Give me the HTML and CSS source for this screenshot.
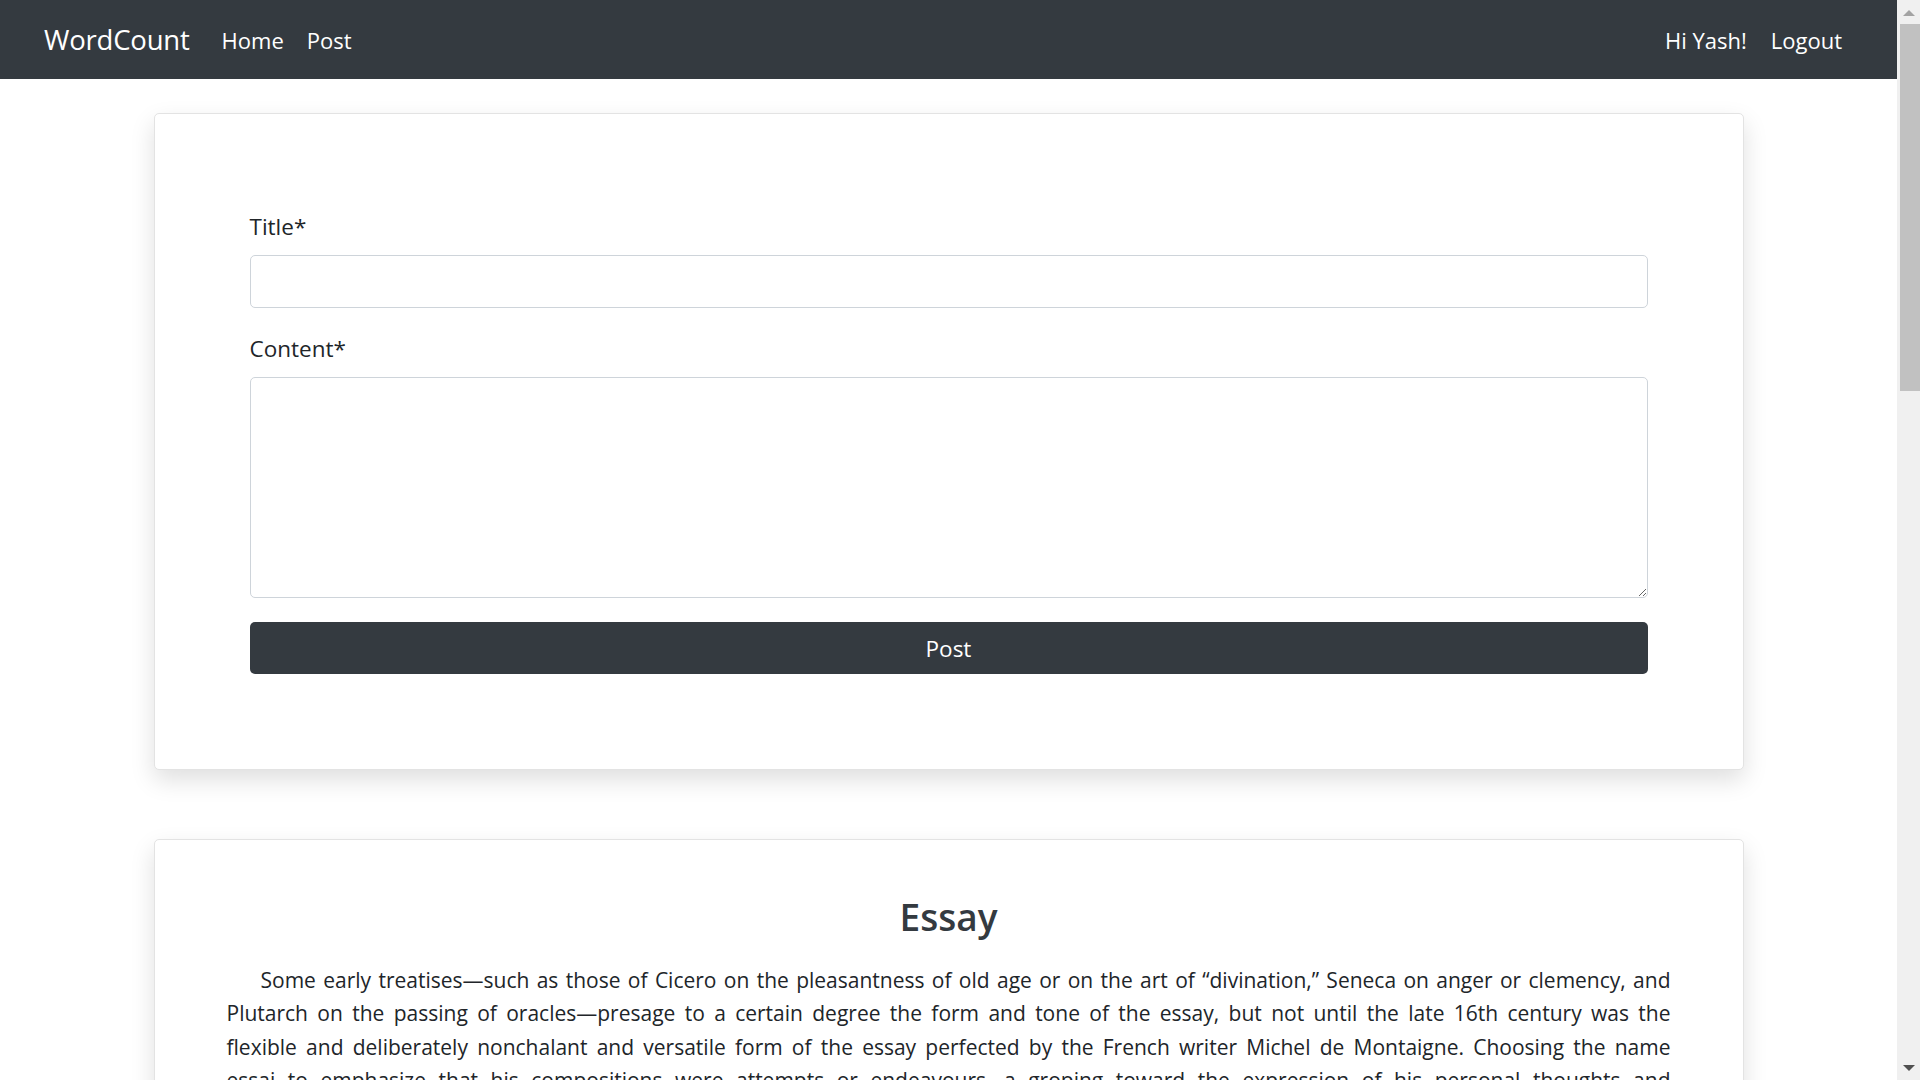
FILE: index.html
```html
<!DOCTYPE html>
<html lang="en">
<head>
<meta charset="utf-8">
<title>WordCount</title>
<link rel="stylesheet" href="styles.css">
</head>
<body>
<div class="page">
  <nav class="navbar">
    <a class="brand" href="#">WordCount</a>
    <ul class="nav-links">
      <li><a href="#">Home</a></li>
      <li><a href="#">Post</a></li>
    </ul>
    <ul class="nav-links nav-right">
      <li><a href="#">Hi Yash!</a></li>
      <li><a href="#">Logout</a></li>
    </ul>
  </nav>
  <main class="main">
    <section class="card form-card">
      <form class="post-form">
        <label class="field-label" for="title">Title*</label>
        <input class="field-input" id="title" type="text">
        <label class="field-label content-label" for="content">Content*</label>
        <textarea class="field-textarea" id="content"></textarea>
        <button class="btn-post" type="button">Post</button>
      </form>
    </section>
    <section class="card essay-card">
      <h2 class="essay-title">Essay</h2>
      <p class="essay-text"><span class="line line-first">Some early treatises—such as those of Cicero on the pleasantness of old age or on the art of “divination,” Seneca on anger or clemency, and</span> <span class="line">Plutarch on the passing of oracles—presage to a certain degree the form and tone of the essay, but not until the late 16th century was the</span> <span class="line">flexible and deliberately nonchalant and versatile form of the essay perfected by the French writer Michel de Montaigne. Choosing the name</span> <span class="line">essai to emphasize that his compositions were attempts or endeavours, a groping toward the expression of his personal thoughts and</span> <span class="rest">experiences, Montaigne used the essay as a means of self-discovery. His Essais, published in their final form in 1595, deal with almost every subject under the sun, from cannibals to the art of conversation.</span></p>
    </section>
  </main>
</div>
<div class="scrollbar">
  <div class="sb-arrow sb-up"></div>
  <div class="sb-thumb"></div>
  <div class="sb-track"></div>
  <div class="sb-arrow sb-down"></div>
</div>
</body>
</html>
```
FILE: styles.css
```css
* { box-sizing: border-box; }
html, body { margin: 0; padding: 0; }
body {
  height: 100vh;
  overflow: hidden;
  display: flex;
  font-family: "Open Sans", "Noto Sans", sans-serif;
  color: #212529;
  background: #fff;
}
.page {
  flex: 1;
  min-width: 0;
  overflow: hidden;
}
.navbar {
  height: 79px;
  background: #343a40;
  display: flex;
  align-items: center;
  padding: 0 55px 0 44px;
}
.navbar a { color: #fff; text-decoration: none; }
.brand {
  font-size: 27.5px;
  margin-right: 32px;
  letter-spacing: -0.2px;
}
.nav-links {
  list-style: none;
  margin: 0;
  padding: 0;
  display: flex;
  gap: 23px;
  font-size: 22px;
}
.nav-right { margin-left: auto; gap: 24px; }

.main { padding-top: 34px; }
.card {
  width: 1590px;
  margin: 0 auto;
  background: #fff;
  border: 1px solid #e3e3e3;
  border-radius: 5px;
  box-shadow: 0 10px 24px rgba(0, 0, 0, 0.13);
}
.form-card { padding: 96px 95px 95px; }
.post-form { display: flex; flex-direction: column; }
.field-label {
  font-size: 22.5px;
  line-height: 34px;
  margin-bottom: 11px;
  color: #212529;
}
.content-label { margin-top: 24px; }
.field-input, .field-textarea {
  width: 100%;
  border: 1px solid #ced4da;
  border-radius: 5px;
  font-family: inherit;
  font-size: 22px;
  background: #fff;
  outline: none;
}
.field-input { height: 53px; }
.field-textarea { height: 221px; resize: vertical; display: block; }
.btn-post {
  margin-top: 24px;
  height: 52px;
  width: 100%;
  border: none;
  border-radius: 5px;
  background: #343a40;
  color: #fff;
  font-family: inherit;
  font-size: 22.5px;
}

.essay-card {
  margin-top: 69px;
  padding: 55px 72px 60px;
}
.essay-title {
  margin: 0 0 25px;
  text-align: center;
  font-size: 37px;
  line-height: 44px;
  font-weight: 600;
  color: #343a40;
}
.essay-text {
  margin: 0;
  font-size: 21px;
  line-height: 33.3px;
  text-align: justify;
  color: #212529;
}
.line {
  display: block;
  text-align: justify;
  text-align-last: justify;
  white-space: nowrap;
}
.line-first { padding-left: 34px; }
.rest { display: block; }

.scrollbar {
  width: 23px;
  height: 100vh;
  background: #f0f0f0;
  display: flex;
  flex-direction: column;
  align-items: center;
}
.sb-arrow {
  width: 0;
  height: 0;
  border-left: 6px solid transparent;
  border-right: 6px solid transparent;
}
.sb-up {
  margin-top: 10px;
  border-bottom: 6px solid #a3a3a3;
}
.sb-thumb {
  margin-top: 8px;
  width: 20px;
  margin-left: 2px;
  height: 367px;
  background: #c1c1c1;
}
.sb-track { flex: 1; }
.sb-down {
  margin-bottom: 9px;
  border-top: 6px solid #505050;
}
```
